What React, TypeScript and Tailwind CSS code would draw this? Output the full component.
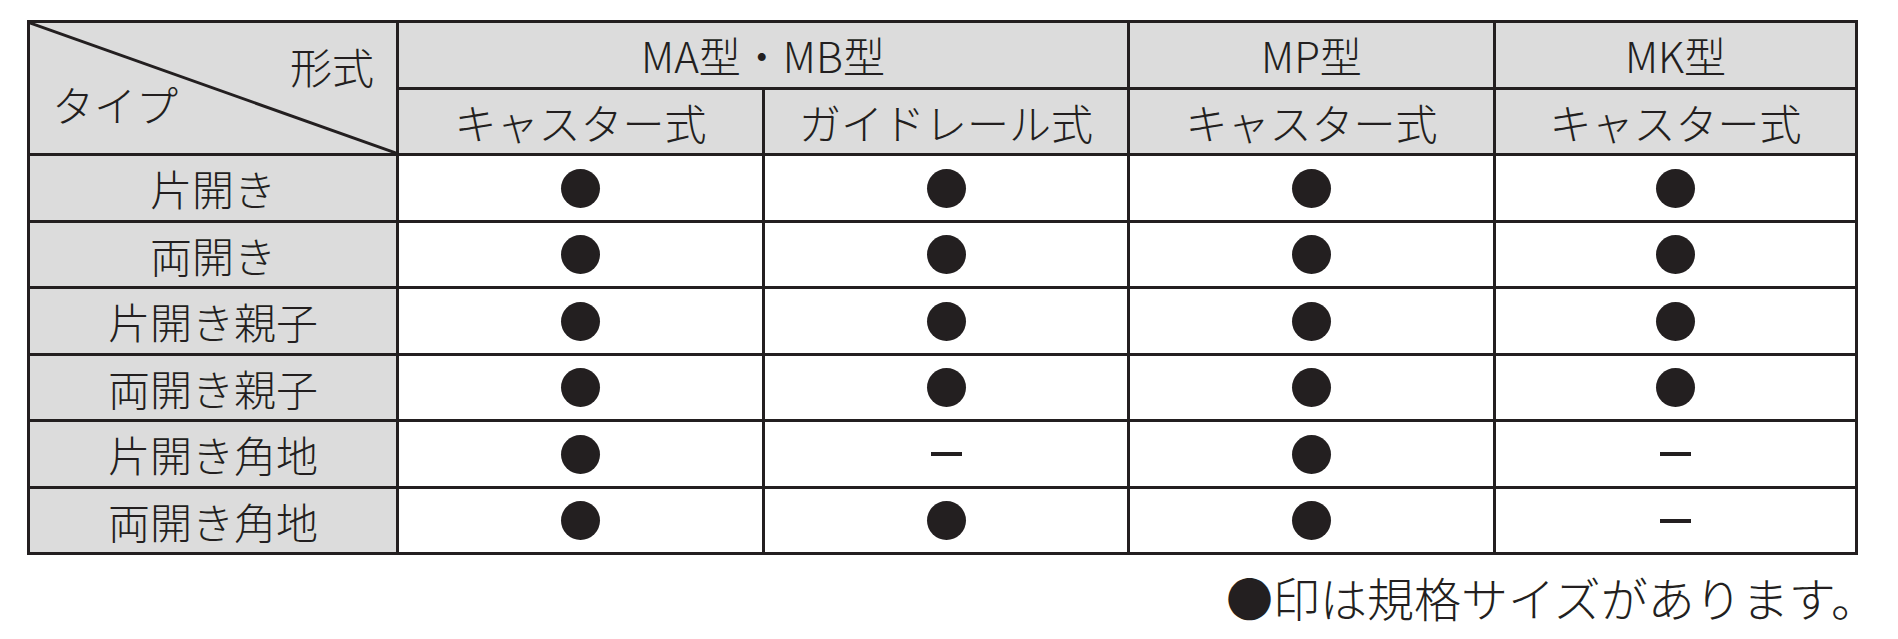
import React from "react";

const ink = "bg-[#231f20]";

const rows: { label: string; marks: boolean[] }[] = [
  { label: "片開き", marks: [true, true, true, true] },
  { label: "両開き", marks: [true, true, true, true] },
  { label: "片開き親子", marks: [true, true, true, true] },
  { label: "両開き親子", marks: [true, true, true, true] },
  { label: "片開き角地", marks: [true, false, true, false] },
  { label: "両開き角地", marks: [true, true, true, false] },
];

const Cell = ({ children, gray = false, className = "" }: { children?: React.ReactNode; gray?: boolean; className?: string }) => (
  <div className={`flex items-center justify-center leading-none ${gray ? "bg-[#dcdcdc]" : "bg-white"} ${className}`}>
    {children}
  </div>
);

const Mark = ({ on }: { on: boolean }) =>
  on ? <div className={`w-[39px] h-[39px] rounded-full ${ink}`} /> : <div className={`w-[31px] h-[4px] ${ink}`} />;

export default function App() {
  return (
    <div className="w-[1898px] h-[639px] bg-white pt-[20px] pl-[27px] font-light text-[#231f20] font-['Noto_Sans_CJK_JP','Noto_Sans',sans-serif]">
      <div className="grid w-[1831px] grid-cols-[366px_363px_362px_363px_359px] grid-rows-[64px_63px_64px_63px_64px_63px_64px_63px] gap-[3px] bg-[#231f20] p-[3px] text-[42px]">
        <div className="relative row-span-2 flex flex-col bg-[#dcdcdc] px-[22px] pt-[24px] leading-[38px]">
          <svg className="absolute inset-0" width="366" height="130" viewBox="0 0 366 130">
            <line x1="0" y1="0" x2="366" y2="130" stroke="#231f20" strokeWidth="3" />
          </svg>
          <span className="self-end">形式</span>
          <span className="self-start">タイプ</span>
        </div>
        <Cell gray className="col-span-2">MA型・MB型</Cell>
        <Cell gray>MP型</Cell>
        <Cell gray>MK型</Cell>
        <Cell gray>キャスター式</Cell>
        <Cell gray>ガイドレール式</Cell>
        <Cell gray>キャスター式</Cell>
        <Cell gray>キャスター式</Cell>
        {rows.map((r) => (
          <React.Fragment key={r.label}>
            <Cell gray>{r.label}</Cell>
            {r.marks.map((m, i) => (
              <Cell key={i}>
                <Mark on={m} />
              </Cell>
            ))}
          </React.Fragment>
        ))}
      </div>
      <p className="mt-[18px] w-[1851px] text-right text-[47px] leading-none">●印は規格サイズがあります。</p>
    </div>
  );
}
